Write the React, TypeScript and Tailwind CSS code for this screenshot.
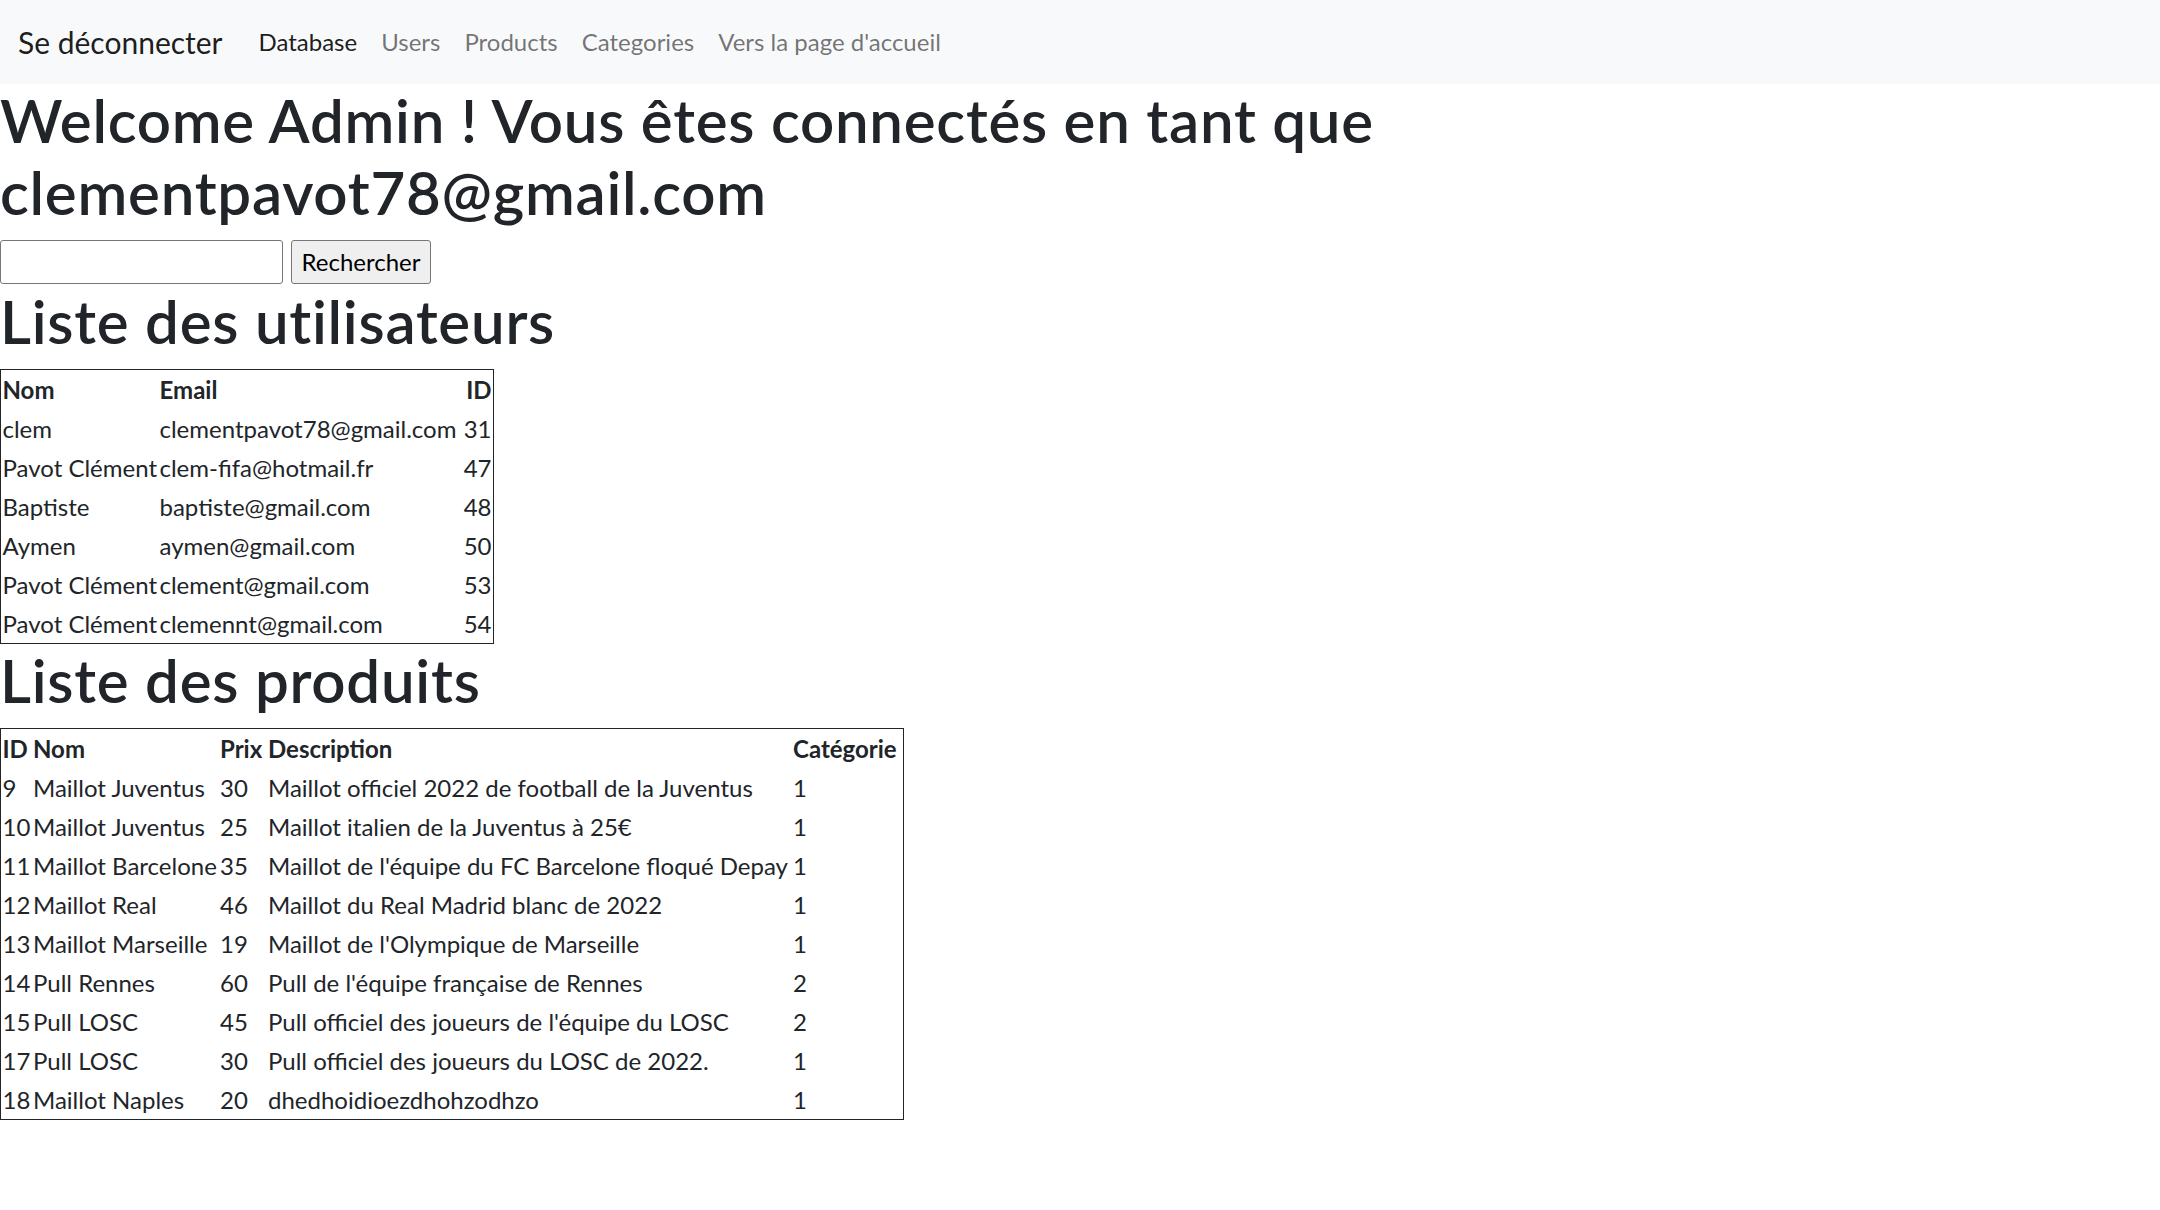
const navLinks = [
  { label: "Database", active: true },
  { label: "Users", active: false },
  { label: "Products", active: false },
  { label: "Categories", active: false },
  { label: "Vers la page d'accueil", active: false },
];

const users = [
  { nom: "clem", email: "clementpavot78@gmail.com", id: 31 },
  { nom: "Pavot Clément", email: "clem-fifa@hotmail.fr", id: 47 },
  { nom: "Baptiste", email: "baptiste@gmail.com", id: 48 },
  { nom: "Aymen", email: "aymen@gmail.com", id: 50 },
  { nom: "Pavot Clément", email: "clement@gmail.com", id: 53 },
  { nom: "Pavot Clément", email: "clemennt@gmail.com", id: 54 },
];

const products = [
  { id: 9, nom: "Maillot Juventus", prix: 30, description: "Maillot officiel 2022 de football de la Juventus", categorie: 1 },
  { id: 10, nom: "Maillot Juventus", prix: 25, description: "Maillot italien de la Juventus à 25€", categorie: 1 },
  { id: 11, nom: "Maillot Barcelone", prix: 35, description: "Maillot de l'équipe du FC Barcelone floqué Depay", categorie: 1 },
  { id: 12, nom: "Maillot Real", prix: 46, description: "Maillot du Real Madrid blanc de 2022", categorie: 1 },
  { id: 13, nom: "Maillot Marseille", prix: 19, description: "Maillot de l'Olympique de Marseille", categorie: 1 },
  { id: 14, nom: "Pull Rennes", prix: 60, description: "Pull de l'équipe française de Rennes", categorie: 2 },
  { id: 15, nom: "Pull LOSC", prix: 45, description: "Pull officiel des joueurs de l'équipe du LOSC", categorie: 2 },
  { id: 17, nom: "Pull LOSC", prix: 30, description: "Pull officiel des joueurs du LOSC de 2022.", categorie: 1 },
  { id: 18, nom: "Maillot Naples", prix: 20, description: "dhedhoidioezdhohzodhzo", categorie: 1 },
];

const cell = "px-[1.5px] py-[1.5px] leading-[36px] whitespace-nowrap text-left";

function Navbar() {
  return (
    <nav className="flex h-[84px] items-center bg-[#f8f9fa] px-[18px]">
      <a className="mr-[24px] py-[7.5px] text-[30px] leading-[45px] text-black/90">Se déconnecter</a>
      <ul className="flex">
        {navLinks.map((link) => (
          <li key={link.label}>
            <a
              className={
                link.active
                  ? "block px-[12px] py-[12px] text-[24px] leading-[36px] text-black/90"
                  : "block px-[12px] py-[12px] text-[24px] leading-[36px] text-black/55"
              }
            >
              {link.label}
            </a>
          </li>
        ))}
      </ul>
    </nav>
  );
}

function Heading({ children }: { children: React.ReactNode }) {
  return (
    <h1 className="mb-[12px] text-[60px] font-semibold leading-[72px] tracking-[0.75px] text-[#212529]">
      {children}
    </h1>
  );
}

function UsersTable() {
  return (
    <table className="w-[494px] table-fixed border-separate border-spacing-0 border border-[#212529]">
      <colgroup>
        <col className="w-[157px]" />
        <col className="w-[304px]" />
        <col className="w-[31px]" />
      </colgroup>
      <thead>
        <tr>
          <th className={`${cell} font-bold`}>Nom</th>
          <th className={`${cell} font-bold`}>Email</th>
          <th className={`${cell} font-bold !text-right`}>ID</th>
        </tr>
      </thead>
      <tbody>
        {users.map((u) => (
          <tr key={u.id}>
            <td className={cell}>{u.nom}</td>
            <td className={cell}>{u.email}</td>
            <td className={`${cell} !text-right`}>{u.id}</td>
          </tr>
        ))}
      </tbody>
    </table>
  );
}

function ProductsTable() {
  return (
    <table className="w-[904px] table-fixed border-separate border-spacing-0 border border-[#212529]">
      <colgroup>
        <col className="w-[30.5px]" />
        <col className="w-[187px]" />
        <col className="w-[48px]" />
        <col className="w-[525px]" />
        <col className="w-[111.5px]" />
      </colgroup>
      <thead>
        <tr>
          <th className={`${cell} font-bold`}>ID</th>
          <th className={`${cell} font-bold`}>Nom</th>
          <th className={`${cell} font-bold`}>Prix</th>
          <th className={`${cell} font-bold`}>Description</th>
          <th className={`${cell} font-bold`}>Catégorie</th>
        </tr>
      </thead>
      <tbody>
        {products.map((p) => (
          <tr key={p.id}>
            <td className={cell}>{p.id}</td>
            <td className={cell}>{p.nom}</td>
            <td className={cell}>{p.prix}</td>
            <td className={cell}>{p.description}</td>
            <td className={cell}>{p.categorie}</td>
          </tr>
        ))}
      </tbody>
    </table>
  );
}

export default function App() {
  return (
    <div className="min-h-[1210px] bg-white font-['Lato',sans-serif] text-[24px] leading-[36px] text-[#212529]">
      <Navbar />
      <Heading>
        Welcome Admin ! Vous êtes connectés en tant que
        <br />
        clementpavot78@gmail.com
      </Heading>
      <form className="flex h-[45px] items-start gap-[8px]" onSubmit={(e) => e.preventDefault()}>
        <input
          type="text"
          className="h-[44px] w-[283px] rounded-[3px] border border-[#767676] bg-white px-[3px] text-black outline-none"
        />
        <button
          type="submit"
          className="h-[44px] w-[140px] rounded-[3px] border border-[#767676] bg-[#efefef] text-center text-black"
        >
          Rechercher
        </button>
      </form>
      <Heading>Liste des utilisateurs</Heading>
      <UsersTable />
      <Heading>Liste des produits</Heading>
      <ProductsTable />
    </div>
  );
}
